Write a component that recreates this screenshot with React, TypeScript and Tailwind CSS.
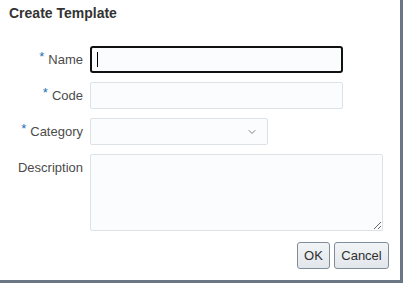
import { ChevronDown } from 'lucide-react'

function Label({ text, required }: { text: string; required?: boolean }) {
  return (
    <div className="h-[27px] flex items-center justify-end text-[13px] text-[#4b4b4b]">
      {required && (
        <span className="text-[#1d6fb8] text-[13px] mr-[4px] -mt-[7px] leading-none">*</span>
      )}
      {text}
    </div>
  )
}

export default function App() {
  return (
    <div
      className="w-[403px] h-[283px] bg-white border-r-[3px] border-b-[3px] border-[#6b7684] flex flex-col"
      style={{ fontFamily: '"Liberation Sans", Arial, sans-serif' }}
    >
      <h1 className="pl-[9px] pt-[5px] text-[14px] font-bold text-[#333333] leading-[16px]">
        Create Template
      </h1>

      <div className="mt-[25px] grid grid-cols-[83px_1fr] gap-x-[7px] gap-y-[9px]">
        <Label text="Name" required />
        <div className="w-[253px] h-[27px] rounded-[3px] border-2 border-[#111111] bg-[#fbfcfe] flex items-center pl-[5px]">
          <span className="w-px h-[15px] bg-black" />
        </div>

        <Label text="Code" required />
        <div className="w-[253px] h-[27px] rounded-[2px] border border-[#dde2e7] bg-[#fbfcfe]" />

        <Label text="Category" required />
        <div className="w-[178px] h-[27px] rounded-[2px] border border-[#dde2e7] bg-[#fbfcfe] flex items-center justify-end pr-[9px]">
          <ChevronDown className="size-[12px] text-[#7d838a]" strokeWidth={2} />
        </div>

        <Label text="Description" />
        <textarea
          readOnly
          className="w-[293px] h-[77px] rounded-[2px] border border-[#dde2e7] bg-[#fbfcfe] resize outline-none"
        />
      </div>

      <div className="mt-[11px] flex justify-end gap-[4px] pr-[11px]">
        <button
          type="button"
          className="w-[33px] h-[27px] rounded-[3px] border border-[#7f8d9b] bg-gradient-to-b from-[#f2f4f6] to-[#e2e7eb] text-[13px] text-[#2f2f2f]"
        >
          OK
        </button>
        <button
          type="button"
          className="w-[55px] h-[27px] rounded-[3px] border border-[#7f8d9b] bg-gradient-to-b from-[#f2f4f6] to-[#e2e7eb] text-[13px] text-[#2f2f2f]"
        >
          Cancel
        </button>
      </div>
    </div>
  )
}
